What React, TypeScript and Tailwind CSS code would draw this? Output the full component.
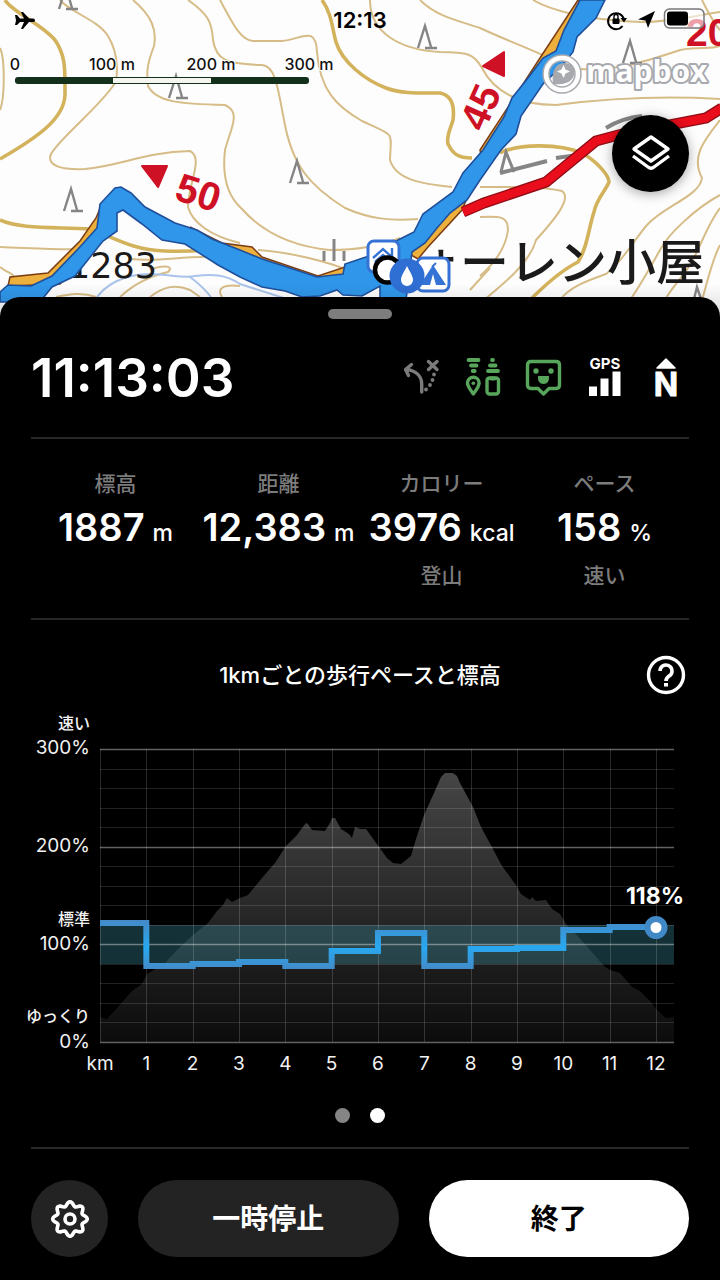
import type { ReactNode } from "react";

const THICK_CONTOURS = [
  "M5 0C12 12 42 24 55 40C66 56 65 70 65 95C64 118 40 136 0 159",
  "M322 0C332 14 332 28 336 42C342 62 365 80 386 88C402 94 420 93 440 93C450 95 455 104 453 120C451 128 446 136 448 144C453 154 458 158 472 158",
  "M500 153C520 143 560 144 582 153C598 162 609 176 609 182C606 190 596 200 594 212C588 230 588 246 578 262C562 270 545 285 530 300",
  "M0 220C20 229 50 227 90 229C112 236 130 250 165 251C190 252 215 250 240 247",
];

const THIN_CONTOURS = [
  "M0 48C5 58 5 98 0 110",
  "M60 0C70 12 98 20 108 36C120 56 118 80 113 86C96 110 60 138 51 154C46 166 62 170 85 169C120 166 145 152 190 151C204 158 188 184 188 207C192 222 210 236 240 243",
  "M133 0C152 16 157 30 154 46C148 62 146 70 148 86C156 102 180 104 225 105C242 112 230 130 225 150C222 176 228 196 241 208C262 232 290 246 330 250C360 250 385 244 400 238",
  "M188 0C208 14 212 22 213 40C216 60 226 64 262 65C276 66 278 90 284 120C292 166 310 186 345 208C370 219 390 221 418 219",
  "M220 0C232 22 240 40 253 41L282 41C300 40 316 24 317 52C320 90 336 106 362 121C396 137 391 130 390 160C396 180 422 184 452 187",
  "M370 0C370 34 402 50 440 52C468 52 474 54 482 68C494 92 520 105 556 105C610 98 670 96 720 99",
  "M420 0C436 16 456 20 480 28C510 42 544 54 570 68C610 74 650 60 680 50C700 46 710 50 720 46",
  "M533 0C550 10 585 20 640 22C680 22 700 14 720 12",
  "M720 120C706 138 690 156 702 178C700 196 664 206 647 225C634 240 624 260 606 274C590 280 570 286 560 300",
  "M480 187C510 187 538 186 562 191C572 198 556 218 536 240C530 262 506 282 484 300",
  "M480 217C500 216 508 216 508 230C506 246 496 262 480 276",
  "M720 195C696 208 668 234 660 250C650 268 640 286 630 300",
  "M720 208C706 226 700 250 688 268C680 280 670 290 665 300",
  "M720 245C712 260 708 280 702 300",
  "M0 247C30 248 60 250 82 249",
  "M0 267C6 272 10 272 14 276",
  "M130 259C160 262 180 256 210 257C240 262 262 270 285 286",
  "M56 297C70 294 82 292 96 297M120 297C134 284 150 276 168 272C176 264 158 266 150 270",
  "M150 297C164 286 176 284 190 290L200 297M222 297C216 288 224 284 240 286",
  "M258 250C290 252 330 262 352 272M470 290L490 268",
  "M702 0C708 12 714 24 720 30",
];

const TREES = [
  [418, 26],
  [169, 76],
  [64, 189],
  [290, 161],
  [623, 41],
  [59, -13],
];

const RED_TRAIL = "M463 212L484 203L546 182L596 141L622 134L706 118L722 108";

function MapArt() {
  return (
    <svg viewBox="0 0 720 318" className="block h-auto w-full" role="img" aria-label="地図">
      <rect width="720" height="318" fill="#fefdfd" />
      <g fill="none" stroke="#d6bc86" strokeWidth="2">
        {THIN_CONTOURS.map((d) => (
          <path key={d} d={d} />
        ))}
      </g>
      <g fill="none" stroke="#d3b25c" strokeWidth="3.6">
        {THICK_CONTOURS.map((d) => (
          <path key={d} d={d} />
        ))}
      </g>
      <path d="M95 300C104 286 122 274 150 274C170 274 182 279 195 276C212 274 225 274 240 284L290 300M190 277Q205 288 213 300" fill="none" stroke="#a9c3ea" strokeWidth="2" />

      <g fill="none" stroke="#858585" strokeWidth="2.4">
        {TREES.map(([x, y]) => (
          <path key={x} d={`M${x} ${y + 22}L${x + 7} ${y}L${x + 13} ${y + 21}M${x + 7} ${y + 22}H${x + 19}`} />
        ))}
        <path d="M324 251V261M334 239V261M344 251V261M501 172L506 152L514 172" strokeWidth="3" />
        <path d="M500 173L547 161M556 158L578 155M606 128Q622 118 642 116" strokeWidth="4" />
        <path d="M694 299L697 287L701 299" />
      </g>

      <g fill="#1a1a1a">
        <text x="68" y="278" fontSize="35" className="font-['DejaVu_Sans',sans-serif]">1283</text>
        <text x="411" y="280" fontSize="49" fontWeight="500">ォーレン小屋</text>
      </g>

      <g fill="#eeb03c" stroke="#7c3c12" strokeWidth="1.5">
        <path d="M8 286L10 277L48 273L80 241L96 218L101 206V240L60 284Z" />
        <path d="M190 227L222 243L252 247L262 257L318 276L348 266V280H310L240 262Z" />
        <path d="M578 0L540 58L480 150L482 160L505 124L556 55L588 0Z" />
        <path d="M484 158L462 210L428 247L418 259L406 252L440 210Z" />
      </g>
      <path d={RED_TRAIL} fill="none" stroke="#8e0d15" strokeWidth="11" />
      <path d={RED_TRAIL} fill="none" stroke="#ea0d1c" strokeWidth="8.5" />
      <path
        d="M0 292L8 285L31 286L52 276L78 249L97 228L100 204L115 188L121 187L131 193L145 207L175 223L197 230L212 239L240 250L262 259L290 268L317 277L334 275L343 274L345 264L366 257L384 250L398 240L414 232L423 214L453 192L463 173L483 150L504 117L512 98L528 78L543 58L556 51L564 30L580 0H605L596 18L577 37L573 52L560 68L543 84L521 116L516 134L501 150L480 180L467 200L450 213L437 228L425 243L412 252L406 300H380V286L362 296L343 295L337 290L320 296L302 297L285 291L262 287L240 277L218 265L185 244L162 240L142 224L123 210L117 213V231L103 241L75 276L52 287L40 302H0Z"
        fill="#2f96e9"
        stroke="#1f4f9b"
        strokeWidth="1.6"
      />

      <g fill="#cf1126" className="font-['Liberation_Sans',sans-serif] font-bold">
        <path d="M142 166L167 166L158 187Z" stroke="#cf1126" strokeLinejoin="round" strokeWidth="2" />
        <path d="M483 66L504 52L504 76Z" stroke="#cf1126" strokeLinejoin="round" strokeWidth="2" />
        <text transform="translate(173 199) rotate(18)" fontSize="40">50</text>
        <text transform="translate(484 133) rotate(-66)" fontSize="40">45</text>
        <text x="686" y="46" fontSize="39">20</text>
      </g>

      <rect x="368" y="241" width="31" height="31" rx="6" fill="#fff" stroke="#3572d5" strokeWidth="3" />
      <path d="M373 258L383 249L393 258M375 262L383 255L391 262M392 248V256" fill="none" stroke="#3572d5" strokeWidth="2.4" />
      <rect x="417" y="258" width="32" height="33" rx="6" fill="#fff" stroke="#3572d5" strokeWidth="3" />
      <path d="M433 265L446 285H436L433 274L430 285H420Z" fill="#3572d5" />
      <path d="M432 267L436 263" stroke="#3572d5" strokeWidth="2" />
      <circle cx="387.500" cy="270" r="12.500" fill="#fff" stroke="#000" strokeWidth="4.500" />
      <circle cx="407" cy="276" r="17.500" fill="#2f6ed3" />
      <path d="M407 266C410 272 413 276 413 280A6 6 0 0 1 401 280C401 276 404 272 407 266Z" fill="#fff" />

      <g fill="#fff">
        <circle cx="562" cy="74" r="16" fill="none" stroke="#a7a9ae" strokeWidth="7.500" />
        <circle cx="562" cy="74" r="16" fill="none" stroke="#fff" strokeWidth="4.500" />
        <path d="M553 84C552 75 553 69 558 65C564 61 572 63 574 70C576 78 569 86 553 84Z" fill="#a7a9ae" />
        <path d="M563.500 65L565.500 69.500L570 71.500L565.500 73.500L563.500 78L561.500 73.500L557 71.500L561.500 69.500Z" />
        <text x="586" y="82" fontSize="30" stroke="#a7a9ae" strokeWidth="4" strokeLinejoin="round" paintOrder="stroke" className="font-['Open_Sans',sans-serif] font-bold">mapbox</text>
      </g>
      <defs>
        <linearGradient id="shade" x1="0" y1="0" x2="0" y2="1">
          <stop offset="0" stopColor="#000" stopOpacity="0" />
          <stop offset="1" stopColor="#000" stopOpacity="0.14" />
        </linearGradient>
      </defs>
      <rect y="284" width="720" height="34" fill="url(#shade)" />
    </svg>
  );
}

function StatusBar() {
  return (
    <div className="grid grid-cols-3 items-center px-[14px] pt-2 text-black">
      <svg width="22" height="18" viewBox="-1 0 22 18" fill="#000" aria-label="機内モード">
        <path d="M0 4H2L5 7.500H9L6 1H8L14 7.500H18Q20 7.500 20 9.500Q20 11 18 11H14L8 18H6L9 11H5L2 14H0L1 9.500Z" />
      </svg>
      <span className="text-center text-[22px] leading-6 font-semibold">12:13</span>
      <svg width="100" height="24" viewBox="0 0 100 24" className="justify-self-end" aria-label="バッテリー">
        <path d="M16.500 18A8 8 0 1 1 18 12" fill="none" stroke="#000" strokeWidth="2" />
        <path d="M14.500 10H21L18 14.500Z" />
        <rect x="6.500" y="10.500" width="7" height="5.500" rx="1" />
        <path d="M8 11V8.500A2 2 0 0 1 12 8.500V11" fill="none" stroke="#000" strokeWidth="1.400" />
        <path d="M49 3L42 20L39.500 12.500L32 11.500Z" />
        <rect x="58.500" y="1" width="39.500" height="19" rx="5" fill="#fff" fillOpacity="0.6" stroke="#77777a" strokeWidth="1.500" />
        <rect x="61" y="3.500" width="21" height="14" rx="3" />
      </svg>
    </div>
  );
}

function ScaleBar() {
  return (
    <svg width="340" height="32" viewBox="0 0 340 32" className="mt-6 block" role="img" aria-label="縮尺">
      <g fontSize="16" fontWeight="500" fill="#111" textAnchor="middle" stroke="#fff" strokeWidth="2" paintOrder="stroke">
        <text x="15" y="14">0</text>
        <text x="112" y="14">100 m</text>
        <text x="211" y="14">200 m</text>
        <text x="309" y="14">300 m</text>
      </g>
      <rect x="15" y="21" width="294" height="7" rx="3" fill="#12301a" />
      <rect x="113" y="22" width="98" height="5" fill="#f5f5f0" />
    </svg>
  );
}

function StatusIcons() {
  return (
    <div className="flex gap-[21px] pr-[3px]">
      <svg width="40" height="40" viewBox="0 0 40 40" fill="none" stroke="#7b7b7b" strokeLinecap="round" strokeLinejoin="round" strokeWidth="3.4" aria-label="ルート外れ通知オフ">
        <path d="M9.500 6.500L3.500 11.500L6.500 17.500M4 11.500C14 12.500 19.700 18 19.700 26V34" />
        <path d="M26.500 3.500L35 11.500M35 3.500L26.500 11.500" />
        <path d="M32 16.500V16.600M30.500 22V22.100M28 27V27.100M24 31.500V31.600" strokeWidth="3.800" />
      </svg>
      <svg width="40" height="40" viewBox="0 0 40 40" fill="none" stroke="#58a55c" strokeLinecap="round" strokeLinejoin="round" strokeWidth="3.400" aria-label="みまもり">
        <path d="M5.500 2H15.500M8 7.500H13.500M9.700 13H11.700M29 2H30M27 7.500H32.500M25 13H35" strokeWidth="3.800" />
        <path d="M10.300 36C7 31 4.500 28.500 4.500 25A5.800 5.800 0 0 1 16.100 25C16.100 28.500 14 31 10.300 36Z" />
        <circle cx="10.300" cy="25.300" r="1.800" fill="#58a55c" stroke="none" />
        <rect x="24" y="20" width="11.500" height="16" rx="2.500" />
        <path d="M28 20.500H31.500" strokeWidth="4" />
      </svg>
      <svg width="40" height="40" viewBox="0 0 40 40" fill="none" stroke="#58a55c" strokeLinejoin="round" strokeWidth="3.400" aria-label="フィールドメモ">
        <path d="M7 3.500H32Q35.500 3.500 35.500 7V27Q35.500 30.500 32 30.500H25L19.500 36L14 30.500H7Q3.500 30.500 3.500 27V7Q3.500 3.500 7 3.500Z" />
        <g fill="#58a55c" stroke="none">
          <circle cx="12" cy="13" r="2.700" />
          <circle cx="27" cy="13" r="2.700" />
          <path d="M14 18H25Q25.500 26 19.500 26Q13.500 26 14 18Z" />
        </g>
      </svg>
      <svg width="40" height="40" viewBox="0 0 40 40" fill="#fff" className="overflow-visible" aria-label="GPS">
        <text x="20" y="11" fontSize="15" textAnchor="middle" className="font-bold">GPS</text>
        <path d="M4 28.500H12V38H4ZM15.500 20.500H23.500V38H15.500ZM27.500 13.500H35.500V38H27.500Z" />
      </svg>
      <svg width="40" height="40" viewBox="0 0 40 40" fill="#fff" className="overflow-visible" aria-label="方位">
        <path d="M20 1L29 10H11Z" stroke="#fff" strokeWidth="1.500" strokeLinejoin="round" />
        <text x="20" y="38" fontSize="32" textAnchor="middle" stroke="#fff" strokeWidth="0.800" className="font-bold">N</text>
      </svg>
    </div>
  );
}

interface StatProps {
  label: string;
  value: string;
  unit: string;
  note?: string;
}

const STATS: StatProps[] = [
  { label: "標高", value: "1887", unit: "m" },
  { label: "距離", value: "12,383", unit: "m" },
  { label: "カロリー", value: "3976", unit: "kcal", note: "登山" },
  { label: "ペース", value: "158", unit: "%", note: "速い" },
];

function Stat({ label, value, unit, note }: StatProps) {
  return (
    <div className="flex flex-col items-center whitespace-nowrap">
      <dt className="text-[21px] leading-8 font-medium text-[#7c7c7c]">{label}</dt>
      <dd className="flex items-baseline gap-2 leading-[54px]">
        <span className="text-[38px] font-semibold">{value}</span>
        <span className="text-[23px] font-medium">{unit}</span>
      </dd>
      {note && <dd className="text-[21px] leading-8 font-medium text-[#7c7c7c]">{note}</dd>}
    </div>
  );
}

const ELEVATION =
  "100,1018 107,1020 118,1008 132,992 142,985 147,975 165,964 178,950 193,936 208,924 217,912 223,906 227,899 232,903 240,899 248,896 262,879 275,864 286,847 297,836 302,829 306,824 308,825 312,831 325,832 330,824 332,819 335,819 341,830 349,835 352,839 355,828 360,830 366,830 379,848 387,859 393,864 401,865 411,857 416,840 424,816 434,794 441,778 445,774 453,774 457,777 460,784 473,808 481,828 487,839 502,867 516,886 521,895 530,901 532,898 536,902 546,901 552,910 560,915 566,925 584,944 604,967 610,971 620,974 632,988 640,992 650,1002 657,1011 666,1019 674,1018";

const PACE_Y = [924, 967, 965, 963, 967, 952, 934, 967, 950, 949, 931, 928];
const KM = 46.33;
const pacePath = PACE_Y.map((y, i) => {
  const from = 100 + i * KM;
  return `${i === 0 ? "M" : "L"}${from} ${y}H${from + KM}`;
}).join("");

function PaceChart() {
  return (
    <svg viewBox="0 700 720 380" className="mt-1 block h-auto w-full" role="img" aria-label="1kmごとの歩行ペースと標高のグラフ">
      <defs>
        <linearGradient id="hill" x1="0" y1="774" x2="0" y2="1043" gradientUnits="userSpaceOnUse">
          <stop offset="0" stopColor="#454545" />
          <stop offset="1" stopColor="#0c0c0c" />
        </linearGradient>
        <linearGradient id="pace" x1="0" y1="922" x2="0" y2="970" gradientUnits="userSpaceOnUse">
          <stop offset="0" stopColor="#438bc9" />
          <stop offset="0.55" stopColor="#28a8f0" />
          <stop offset="1" stopColor="#438bc9" />
        </linearGradient>
      </defs>
      <polygon points={`100,1043 ${ELEVATION} 674,1043`} fill="url(#hill)" />
      <rect x="100" y="926" width="574" height="39" fill="#3b8fa0" fillOpacity="0.34" />
      <g stroke="#fff" strokeWidth="1">
        {Array.from({ length: 16 }, (_, i) => (
          <path key={i} d={`M100 ${Math.round(750 + i * 19.53) + 0.5}H674`} strokeOpacity={i % 5 === 0 ? 0.38 : 0.13} strokeWidth={i % 5 === 0 ? 1.5 : 1} />
        ))}
        {Array.from({ length: 13 }, (_, i) => (
          <path key={i} d={`M${Math.round(100 + i * KM) + 0.5} 750V1043`} strokeOpacity="0.16" />
        ))}
      </g>
      <path d={pacePath} fill="none" stroke="url(#pace)" strokeWidth="6" />
      <circle cx="656" cy="928.500" r="8.500" fill="#fff" stroke="#4089c6" strokeWidth="6" />
      <g fill="#f2f2f2" fontSize="19" textAnchor="end">
        <text x="90" y="755">300%</text>
        <text x="90" y="853">200%</text>
        <text x="90" y="951">100%</text>
        <text x="90" y="1049">0%</text>
        <g fontSize="16" fontWeight="500">
          <text x="90" y="730">速い</text>
          <text x="90" y="926">標準</text>
          <text x="90" y="1023">ゆっくり</text>
        </g>
      </g>
      <g fill="#f2f2f2" fontSize="19" textAnchor="middle">
        {Array.from({ length: 13 }, (_, i) => (
          <text key={i} x={100 + i * KM} y="1071">
            {i === 0 ? "km" : i}
          </text>
        ))}
      </g>
      <text x="655" y="905" fontSize="23" fontWeight="700" fill="#fff" textAnchor="middle">
        118%
      </text>
    </svg>
  );
}

const gearPath =
  Array.from({ length: 96 }, (_, i) => {
    const a = (i / 96) * Math.PI * 2;
    const r = 15.2 + 2.1 * Math.cos(8 * a);
    return `${i ? "L" : "M"}${(20 + r * Math.cos(a)).toFixed(2)} ${(20 + r * Math.sin(a)).toFixed(2)}`;
  }).join("") + "Z";

function Divider(): ReactNode {
  return <hr className="mx-[31px] h-[2px] border-0 bg-[#272727]" />;
}

export default function App() {
  return (
    <main lang="ja" className="min-h-screen bg-black font-['Inter','Noto_Sans_CJK_JP',sans-serif] text-white">
      <section className="relative">
        <MapArt />
        <div className="absolute inset-x-0 top-0">
          <StatusBar />
          <ScaleBar />
        </div>
        <button type="button" aria-label="レイヤー" className="absolute top-[115px] right-[31px] flex size-[77px] items-center justify-center rounded-full bg-black shadow-[0_2px_12px_rgba(0,0,0,0.35)]">
          <svg width="42" height="40" viewBox="0 0 42 40" fill="none" stroke="#fff" strokeWidth="3.400" strokeLinejoin="round">
            <path d="M21 3L38 15L21 27L4 15Z" />
            <path d="M3 22L18 33Q21 35.500 24 33L39 22" />
          </svg>
        </button>
      </section>

      <section className="relative -mt-[21px] rounded-t-[20px] bg-black pt-3">
        <button type="button" aria-label="パネルを開閉" className="mx-auto block h-[10px] w-16 rounded-full bg-[#7d7d7d]" />
        <header className="flex h-[118px] items-center justify-between px-[31px]">
          <time className="text-[53px] leading-none font-semibold">11:13:03</time>
          <StatusIcons />
        </header>
        <Divider />
        <dl className="grid h-[179px] grid-cols-4 px-[34px] pt-[29px]">
          {STATS.map((stat) => (
            <Stat key={stat.label} {...stat} />
          ))}
        </dl>
        <Divider />

        <div className="grid grid-cols-[1fr_auto_1fr] items-center px-[34px] pt-[35px]">
          <h2 className="col-start-2 text-[22px] leading-8 font-medium">1kmごとの歩行ペースと標高</h2>
          <button type="button" aria-label="ヘルプ" className="justify-self-end">
            <svg width="40" height="40" viewBox="0 0 40 40" fill="none" stroke="#fff" strokeWidth="3.400" className="block">
              <circle cx="20" cy="20" r="17.500" />
              <path d="M14 16A6 6 0 1 1 24.500 20C22 22 20 22.500 20 26" strokeWidth="3.600" />
              <path d="M18 28H22V31.500H18Z" fill="#fff" stroke="none" />
            </svg>
          </button>
        </div>
        <PaceChart />
        <div className="flex h-[68px] items-center justify-center gap-5 pt-1">
          <button type="button" aria-label="1ページ目" className="size-[15px] rounded-full bg-[#858585]" />
          <button type="button" aria-label="2ページ目" aria-current="true" className="size-[15px] rounded-full bg-white" />
        </div>
        <Divider />

        <footer className="flex gap-[30px] px-[31px] pt-[31px] pb-[23px] text-[28px] font-bold">
          <button type="button" aria-label="設定" className="flex size-[77px] shrink-0 items-center justify-center rounded-full bg-[#232323]">
            <svg width="40" height="40" viewBox="0 0 40 40" fill="none" stroke="#fff" strokeWidth="3.600" strokeLinejoin="round">
              <path d={gearPath} />
              <circle cx="20" cy="20" r="5" />
            </svg>
          </button>
          <button type="button" className="h-[77px] flex-1 rounded-full bg-[#232323]">一時停止</button>
          <button type="button" className="h-[77px] flex-1 rounded-full bg-white text-black">終了</button>
        </footer>
      </section>
    </main>
  );
}
